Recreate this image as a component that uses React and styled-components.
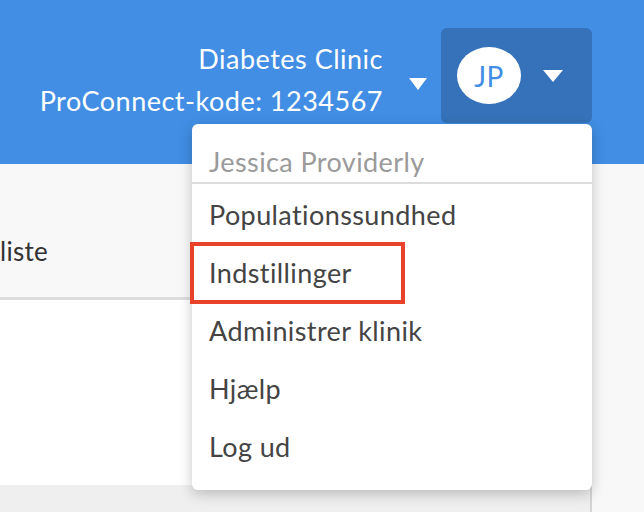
import React from 'react';
import styled, { createGlobalStyle } from 'styled-components';

const GlobalStyle = createGlobalStyle`
  html, body {
    margin: 0;
    padding: 0;
    width: 644px;
    height: 512px;
    overflow: hidden;
    font-family: Lato, "Open Sans", "Liberation Sans", sans-serif;
  }
`;

const Page = styled.div`
  width: 644px;
  height: 512px;
  display: flex;
  flex-direction: column;
  background: #f8f8f8;
`;

const Header = styled.header`
  height: 164px;
  box-sizing: border-box;
  background: #418ee4;
  display: flex;
  justify-content: flex-end;
  align-items: flex-start;
  padding: 28px 52px 0 0;
`;

const ClinicInfo = styled.div`
  margin-top: 10px;
  color: #ffffff;
  font-size: 27px;
  line-height: 42px;
  text-align: right;
  letter-spacing: 0.5px;
`;

const Caret = styled.span`
  display: block;
  width: 0;
  height: 0;
  border-left: ${p => p.$w / 2}px solid transparent;
  border-right: ${p => p.$w / 2}px solid transparent;
  border-top: 12px solid #ffffff;
  margin-top: ${p => p.$top}px;
  margin-left: ${p => p.$left}px;
  margin-right: ${p => p.$right}px;
`;

const UserMenu = styled.div`
  position: relative;
`;

const UserButton = styled.div`
  width: 151px;
  height: 95px;
  box-sizing: border-box;
  background: #3572b9;
  border-radius: 6px;
  display: flex;
  align-items: center;
  padding-left: 16px;
`;

const Avatar = styled.div`
  width: 64px;
  height: 57px;
  border-radius: 50%;
  background: #ffffff;
  color: #418ee4;
  font-size: 28px;
  display: flex;
  align-items: center;
  justify-content: center;
  letter-spacing: 0.5px;
`;

const Dropdown = styled.div`
  position: absolute;
  top: 96px;
  right: 0;
  width: 400px;
  background: #ffffff;
  border-radius: 6px;
  box-shadow: 0 4px 14px rgba(0, 0, 0, 0.22);
  padding-bottom: 14px;
  z-index: 10;
`;

const MenuTitle = styled.div`
  padding: 0 17px;
  height: 58px;
  line-height: 76px;
  font-size: 27px;
  color: #9a9a9a;
  border-bottom: 2px solid #dcdcdc;
  letter-spacing: 0.4px;
  overflow: hidden;
`;

const MenuItem = styled.div`
  position: relative;
  height: 58px;
  line-height: 58px;
  padding: 0 17px;
  font-size: 27px;
  color: #444444;
  letter-spacing: 0.4px;
  margin-top: ${p => (p.$first ? 2 : 0)}px;
`;

const Highlight = styled.span`
  position: absolute;
  left: -2px;
  top: -2px;
  width: 215px;
  height: 62px;
  box-sizing: border-box;
  border: 4px solid #e8422a;
`;

const Body = styled.div`
  flex: 1;
  display: flex;
`;

const Main = styled.div`
  width: 592px;
  box-sizing: border-box;
  border-right: 2px solid #d4d4d4;
  display: flex;
  flex-direction: column;
`;

const TabBar = styled.div`
  height: 133px;
  background: #f8f8f8;
  border-bottom: 3px solid #dddddd;
  font-size: 26px;
  color: #333333;
  line-height: 174px;
  letter-spacing: 0.3px;
`;

const Content = styled.div`
  height: 185px;
  background: #ffffff;
`;

const Footer = styled.div`
  flex: 1;
  background: #efefef;
`;

const Aside = styled.div`
  flex: 1;
  background: #f8f8f8;
`;

const items = [
  'Populationssundhed',
  'Indstillinger',
  'Administrer klinik',
  'Hjælp',
  'Log ud',
];

export default function App() {
  return (
    <>
      <GlobalStyle />
      <Page>
        <Header>
          <ClinicInfo>
            <div>Diabetes Clinic</div>
            <div>ProConnect-kode: 1234567</div>
          </ClinicInfo>
          <Caret $w={19} $top={50} $left={26} $right={14} />
          <UserMenu>
            <UserButton>
              <Avatar>JP</Avatar>
              <Caret $w={20} $top={0} $left={22} $right={0} />
            </UserButton>
            <Dropdown>
              <MenuTitle>Jessica Providerly</MenuTitle>
              {items.map((label, i) => (
                <MenuItem key={label} $first={i === 0}>
                  {label}
                  {label === 'Indstillinger' && <Highlight />}
                </MenuItem>
              ))}
            </Dropdown>
          </UserMenu>
        </Header>
        <Body>
          <Main>
            <TabBar>liste</TabBar>
            <Content />
            <Footer />
          </Main>
          <Aside />
        </Body>
      </Page>
    </>
  );
}
